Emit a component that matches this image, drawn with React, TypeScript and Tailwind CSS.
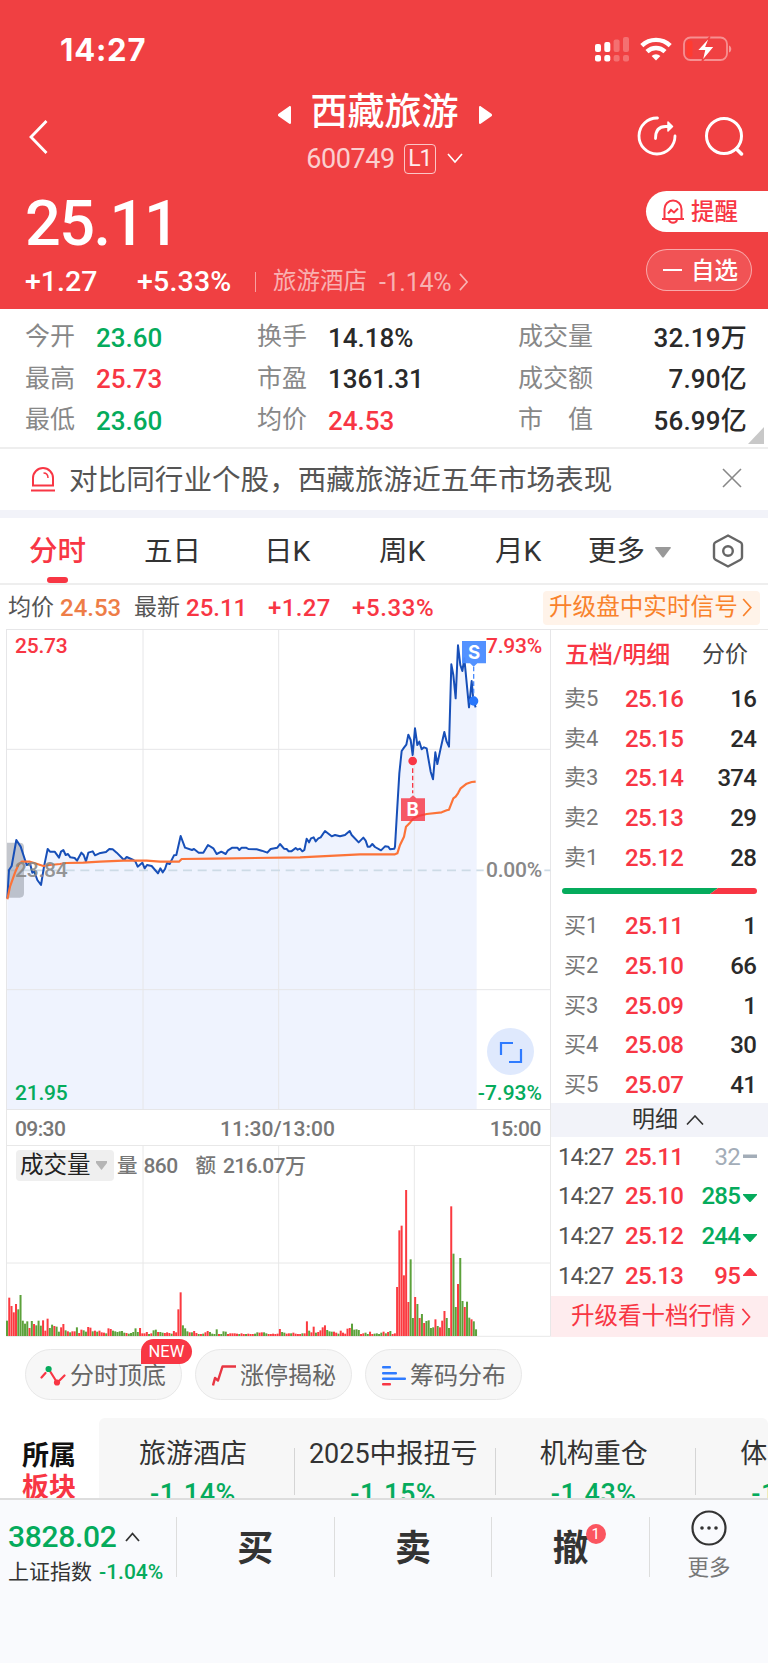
import clsx from 'clsx';

type Tone = 'up' | 'down' | 'dark';

const toneClass: Record<Tone, string> = {
  up: 'text-[#f83644]',
  down: 'text-[#05ab5c]',
  dark: 'text-[#2a2a2a]',
};

const stats: { label: string; value: string; tone: Tone }[][] = [
  [
    { label: '今开', value: '23.60', tone: 'down' },
    { label: '换手', value: '14.18%', tone: 'dark' },
    { label: '成交量', value: '32.19万', tone: 'dark' },
  ],
  [
    { label: '最高', value: '25.73', tone: 'up' },
    { label: '市盈', value: '1361.31', tone: 'dark' },
    { label: '成交额', value: '7.90亿', tone: 'dark' },
  ],
  [
    { label: '最低', value: '23.60', tone: 'down' },
    { label: '均价', value: '24.53', tone: 'up' },
    { label: '市　值', value: '56.99亿', tone: 'dark' },
  ],
];

const asks = [
  ['卖5', '25.16', '16'],
  ['卖4', '25.15', '24'],
  ['卖3', '25.14', '374'],
  ['卖2', '25.13', '29'],
  ['卖1', '25.12', '28'],
];

const bids = [
  ['买1', '25.11', '1'],
  ['买2', '25.10', '66'],
  ['买3', '25.09', '1'],
  ['买4', '25.08', '30'],
  ['买5', '25.07', '41'],
];

const ticks = [
  { price: '25.11', vol: '32', dir: 'flat' },
  { price: '25.10', vol: '285', dir: 'down' },
  { price: '25.12', vol: '244', dir: 'down' },
  { price: '25.13', vol: '95', dir: 'up' },
];

// Chart coordinates are in thirds of a pixel
const pricePoints =
  '22,835 27,750 35,738 49,660 62,680 80,735 90,730 97,758 103,755 112,780 123,795 132,740 143,687 150,695 164,695 177,713 183,695 190,690 197,705 204,702 211,712 224,714 231,722 244,698 251,705 258,724 265,698 278,694 285,706 298,700 318,696 328,687 338,688 350,698 372,720 380,711 400,720 406,724 413,740 427,728 434,745 441,735 455,738 474,760 481,745 488,757 495,747 501,729 509,732 522,706 529,705 542,648 555,683 576,690 582,687 596,698 610,698 624,675 640,685 650,702 664,695 677,702 684,691 697,683 712,683 718,690 725,683 738,683 745,687 770,688 785,692 802,698 812,687 832,683 840,672 852,686 860,687 866,694 874,694 887,684 893,689 900,686 907,694 913,690 920,656 927,667 933,655 941,652 947,664 955,655 962,652 975,633 995,649 1005,645 1020,649 1035,645 1049,633 1055,645 1076,667 1090,653 1097,662 1103,680 1110,680 1117,672 1125,681 1143,691 1155,679 1165,680 1170,688 1183,686 1185,680 1192,560 1198,460 1205,393 1212,383 1219,374 1225,344 1232,360 1238,405 1245,325 1252,375 1258,365 1265,388 1272,382 1280,385 1285,415 1292,455 1299,478 1306,397 1312,432 1322,385 1333,336 1340,365 1347,380 1354,133 1360,165 1367,235 1374,76 1381,135 1387,153 1393,115 1407,262 1415,183 1420,240 1427,262';

const avgPoints =
  '22,838 30,800 45,758 55,735 65,725 90,725 105,730 130,738 150,735 180,732 200,729 250,728 300,725 370,722 440,722 480,725 537,725 545,717 640,716 900,712 1080,703 1185,703 1192,700 1200,675 1212,650 1218,620 1230,608 1240,596 1255,588 1280,582 1325,577 1340,571 1347,569 1360,535 1367,530 1374,520 1382,505 1400,491 1415,486 1427,485';

// One entry per traded minute: direction + bar height
const volumes = (
  'g46 r115 r90 r71 r96 g80 g123 g46 g37 g44 r24 g45 r36 g32 g46 g31 r47 r16 r52 g24 g34 r30 g28 g13 r26 r36 g17 r14 g11 r14 r14 g26 r9 r19 g17 g13 r27 r25 g14 r16 ' +
  'g13 r16 r11 r10 g8 r23 r21 g16 g14 g12 g14 g15 g10 r9 g7 g9 g12 g23 g12 r24 r8 r8 r12 g6 r8 g17 g19 r12 g12 g10 r9 r11 r9 g7 r15 r11 r80 r131 g32 g23 ' +
  'g14 r11 g11 r15 r9 g6 r6 g7 r11 r15 g12 g7 g6 g20 r6 g6 g14 g13 r6 r8 r8 r8 r7 g6 r8 r6 g6 r7 r6 r6 g7 g11 r10 r11 g11 g8 r6 r6 r7 r6 ' +
  'r7 r21 g12 g10 r7 r8 g8 r10 r7 r6 r6 g8 r8 r44 g16 r11 r28 g10 r12 r17 r26 r32 g18 g14 g13 r13 r10 g7 r16 r10 r7 r22 r24 g37 g19 g20 g18 r6 r8 g10 ' +
  'g6 r13 r6 g7 g8 g6 g10 r13 g8 r12 g15 r6 r8 r147 r317 r331 r182 r438 r102 g230 g54 r117 g96 r54 g66 r39 g45 g47 g24 g26 r50 g30 r26 r46 r75 g54 g24 r389 g247 g87 ' +
  'r156 g234 g105 r87 g103 g55 r50 g44 g20'
).split(' ');

function Chevron({ className }: { className?: string }) {
  return (
    <svg className={className} viewBox="0 0 12 20" fill="none" stroke="currentColor" strokeWidth="1.8">
      <path d="M2 1l8 9-8 9" />
    </svg>
  );
}

function StatusBar() {
  return (
    <div className="flex h-[98px] items-center justify-between pr-[36px] pl-[60px]">
      <span className="font-[Inter] text-[31px] leading-none font-bold tracking-[0.8px]">14:27</span>
      <div className="flex items-center gap-[11px]">
        <svg width="34" height="25" viewBox="0 0 34 25" fill="#fff">
          <rect x="0" y="7" width="6" height="8" rx="2" />
          <rect x="9.3" y="5" width="6" height="10" rx="2" />
          <rect x="18.6" y="2.5" width="6" height="12.5" rx="2" opacity=".25" />
          <rect x="28" y="0" width="6" height="15" rx="2" opacity=".25" />
          <rect x="0" y="18" width="6" height="6.5" rx="2" />
          <rect x="9.3" y="18" width="6" height="6.5" rx="2" />
          <rect x="18.6" y="18" width="6" height="6.5" rx="2" opacity=".25" />
          <rect x="28" y="18" width="6" height="6.5" rx="2" opacity=".25" />
        </svg>
        <svg width="32" height="24" viewBox="0 0 32 24" fill="none" stroke="#fff" strokeWidth="4.400">
          <path d="M1.800 8.600a20.400 20.400 0 0 1 28.400 0" />
          <path d="M7 14.600a13 13 0 0 1 18 0" />
          <path d="M16 23.500l-4.400-4.600a6.400 6.400 0 0 1 8.800 0z" fill="#fff" stroke="none" />
        </svg>
        <svg width="49" height="26" viewBox="0 0 49 26" fill="none">
          <rect x="1" y="1.500" width="43" height="22.500" rx="6.500" stroke="#fff" strokeOpacity=".42" strokeWidth="1.800" />
          <rect x="3.500" y="4.500" width="6" height="16.500" rx="2.500" fill="#ff3b30" />
          <path d="M46 9.500c3 1 3 6 0 7z" fill="#fff" fillOpacity=".45" />
          <path d="M27 .5L14 14.500h7.500L19 25.500l12.500-15h-8.500z" fill="#fff" stroke="#f04042" strokeWidth="1.200" />
        </svg>
      </div>
    </div>
  );
}

function Header() {
  return (
    <header className="h-[309px] bg-[#f04042] text-white">
      <StatusBar />
      <div className="flex h-[82px] items-center pr-[24px] pl-[29px]">
        <svg width="20" height="34" viewBox="0 0 20 34" fill="none" stroke="#fff" strokeWidth="2.800" className="mt-[-4px]">
          <path d="M17.500 1L2 17l15.500 16" />
        </svg>
        <div className="mt-[-10px] flex flex-1 flex-col items-center pl-[83px]">
          <div className="flex items-center gap-[20px]">
            <svg width="13" height="18" viewBox="0 0 13 18" fill="#fff">
              <path d="M13 1.500v15c0 1.500-1 2-2 1L.6 10.200a1.600 1.600 0 0 1 0-2.400L11 .5c1-.9 2-.5 2 1z" />
            </svg>
            <h1 className="h-[40px] text-[37px] leading-[36px] font-medium">西藏旅游</h1>
            <svg width="13" height="18" viewBox="0 0 13 18" fill="#fff">
              <path d="M0 1.500v15c0 1.500 1 2 2 1l10.400-7.300a1.600 1.600 0 0 0 0-2.400L2 .5C1-.4 0 0 0 1.500z" />
            </svg>
          </div>
          <div className="mt-[9px] flex items-center">
            <span className="text-[27px] leading-[30px] tracking-[-0.4px] opacity-75">600749</span>
            <span className="ml-[9px] flex h-[30px] w-[32px] items-center justify-center rounded-[4px] border border-white/70 text-[23px] leading-none tracking-[-1px] text-white/90">
              L1
            </span>
            <svg width="16" height="11" viewBox="0 0 16 11" fill="none" stroke="#fff" strokeWidth="1.600" className="ml-[11px]">
              <path d="M1 1l7 8 7-8" />
            </svg>
          </div>
        </div>
        <svg width="40" height="40" viewBox="0 0 40 40" fill="none" stroke="#fff" strokeWidth="2.800" strokeLinecap="round" className="-mt-[6px]">
          <path d="M20.500 2A18 18 0 1 0 38 20" />
          <path d="M18.500 22.500c0-8 3-12 10-12h3" />
          <path d="M31 6l4.500 4.500L31 15z" fill="#fff" strokeWidth="1.500" strokeLinejoin="round" />
        </svg>
        <svg width="40" height="40" viewBox="0 0 40 40" fill="none" stroke="#fff" strokeWidth="3" strokeLinecap="round" className="-mt-[6px] ml-[27px]">
          <circle cx="20" cy="20" r="17.500" />
          <path d="M32.500 33l5 5" strokeWidth="3.500" />
        </svg>
      </div>
      <div className="flex h-[129px] justify-between pl-[25px]">
        <div className="pt-[12px]">
          <div className="text-[63px] leading-[63px] font-medium tracking-[-1.500px]">25.11</div>
          <div className="mt-[12px] flex h-[30px] items-center text-[28.500px] leading-none font-medium">
            <span className="w-[112px]">+1.27</span>
            <span className="w-[118px] tracking-[0.2px]">+5.33%</span>
            <span className="h-[20px] w-px bg-white/50"></span>
            <span className="ml-[17px] text-[23.500px] font-normal text-white/60">旅游酒店</span>
            <span className="ml-[12px] text-[25px] font-normal tracking-[-0.3px] text-white/60">-1.14%</span>
            <Chevron className="ml-[7px] h-[18px] w-[11px] text-white/60" />
          </div>
        </div>
        <div className="flex flex-col items-end pt-[11px] text-[23.500px] leading-none font-medium">
          <button className="flex h-[41px] w-[122px] items-center rounded-l-full bg-white pl-[14px] text-[#f83644]">
            <svg width="26" height="25" viewBox="0 0 26 25" fill="none" stroke="currentColor" strokeWidth="2">
              <path d="M2 20h22M4.500 19.500V10a8.500 8.500 0 0 1 17 0v9.500M9 21c1 3.500 7 3.500 8 0" />
              <path d="M8 14.500l3-3.500 3 2.500 4-4" />
            </svg>
            <span className="ml-[5px] pt-[3px]">提醒</span>
          </button>
          <button className="mt-[17px] mr-[16px] flex h-[42px] w-[106px] items-center rounded-full border border-white/50 bg-white/10 pl-[16px]">
            <span className="h-[2px] w-[19px] bg-white"></span>
            <span className="ml-[9px] pt-[3px]">自选</span>
          </button>
        </div>
      </div>
    </header>
  );
}

function Stats() {
  return (
    <section className="relative flex h-[140px] flex-col border-b-2 border-[#eee] pt-[8px]">
      {stats.map((row, i) => (
        <div key={i} className="flex h-[41.500px] items-center pr-[21px] pl-[25px] text-[26px] leading-none">
          {row.map((cell, j) => (
            <div key={cell.label} className={clsx('flex items-center', j === 0 && 'w-[232px]', j === 1 && 'w-[261px]', j === 2 && 'flex-1')}>
              <span className={clsx('pb-[2px] text-[25px] text-[#888]', j < 2 && 'w-[71px]')}>{cell.label}</span>
              <span className={clsx('font-medium', j === 2 && 'ml-auto tracking-[0.2px]', toneClass[cell.tone])}>{cell.value}</span>
            </div>
          ))}
        </div>
      ))}
      <svg className="absolute right-[4px] bottom-[3px]" width="16" height="17" viewBox="0 0 16 17" fill="#c8c8c8">
        <path d="M16 0v17H0z" />
      </svg>
    </section>
  );
}

function Notice() {
  return (
    <section className="flex h-[69px] items-center border-b-[8px] border-[#f2f3f9] pr-[26px] pl-[31px] text-[28.600px] leading-none text-[#555]">
      <svg width="24" height="25" viewBox="0 0 24 25" fill="none" stroke="#f83644" strokeWidth="2">
        <path d="M2 18.500V11a10 10 0 0 1 20 0v7.500zM0 23.500h24" />
        <path d="M12.500 6c3 0 4.500 2 4.500 5" strokeWidth="1.500" />
      </svg>
      <span className="ml-[14px] flex-1 pt-[2px] whitespace-nowrap">对比同行业个股，西藏旅游近五年市场表现</span>
      <svg width="20" height="20" viewBox="0 0 20 20" fill="none" stroke="#888" strokeWidth="1.600" className="-mt-[3px]">
        <path d="M1 1l18 18M19 1L1 19" />
      </svg>
    </section>
  );
}

function Tabs() {
  return (
    <nav className="flex h-[67px] items-center border-b-2 border-[#eee] pt-[4px] pr-[24px] pl-[29px] text-[28.500px] leading-none text-[#333]">
      <span className="relative w-[115px] font-medium text-[#f83644]">
        分时
        <i className="absolute top-[39px] left-[18px] h-[6px] w-[21px] rounded-[3px] bg-[#f83644]"></i>
      </span>
      <span className="w-[120px]">五日</span>
      <span className="w-[115px]">日K</span>
      <span className="w-[116px]">周K</span>
      <span className="w-[93px]">月K</span>
      <span>更多</span>
      <svg width="16" height="11" viewBox="0 0 16 11" fill="#999" className="ml-[10px]">
        <path d="M1 0h14q1.500 0 .6 1.300L9 10q-1 1-2 0L.4 1.300Q-.5 0 1 0z" />
      </svg>
      <svg width="32" height="34" viewBox="0 0 32 34" fill="none" stroke="#666" strokeWidth="2.400" className="-mt-[4px] ml-auto">
        <path d="M16 1.500l12.500 6.800q1.500.8 1.500 2.500v12.400q0 1.700-1.500 2.500L16 32.500 3.500 25.700Q2 24.900 2 23.200V10.800q0-1.700 1.500-2.500z" />
        <circle cx="16" cy="17" r="4.800" />
      </svg>
    </nav>
  );
}

function QuoteLine() {
  return (
    <div className="flex h-[44px] items-center pt-px pr-[8px] pl-[8px] text-[24px] leading-none font-medium text-[#f83644]">
      <span className="w-[52px] text-[23px] font-normal text-[#555]">均价</span>
      <span className="w-[74px] text-[#ee7d47]">24.53</span>
      <span className="w-[52px] text-[23px] font-normal text-[#555]">最新</span>
      <span className="w-[82px]">25.11</span>
      <span className="w-[84px] tracking-[0.4px]">+1.27</span>
      <span className="tracking-[0.6px]">+5.33%</span>
      <button className="ml-auto flex h-[34px] w-[217px] items-center rounded-[4px] bg-[#fff3e9] pl-[6px] text-[23.600px] font-normal text-[#f9822c]">
        升级盘中实时信号
        <Chevron className="ml-[3px] h-[19px] w-[12px]" />
      </button>
    </div>
  );
}

function PriceChart() {
  return (
    <div className="relative h-[481px] w-[545px] text-[21px] leading-none font-medium">
      <svg className="block" width="545" height="481" viewBox="18 27 1635 1443" fill="none">
        <polygon points={`21,1467 ${pricePoints} 1430,262 1430,1467`} fill="#eff3fe" />
        <g stroke="#e6e6e8" strokeWidth="3">
          <rect x="19.500" y="28.500" width="1632" height="1440" />
          <path d="M19 388h1632M19 1109h1632" />
          <path d="M429 28v1440M836 28v1440M1243 28v1440" />
        </g>
        <path d="M21 751h1430M1633 751h18" stroke="#cddbe6" strokeWidth="5" strokeDasharray="27 17" />
        <path d="M21 668h38q13 0 13 13v138q0 14-13 14H21z" fill="#848a96" fillOpacity=".48" />
        <polyline points={pricePoints} stroke="#174fb8" strokeWidth="6" strokeLinejoin="round" />
        <polyline points={avgPoints} stroke="#fc7338" strokeWidth="6.500" strokeLinejoin="round" />
        {/* Buy marker */}
        <path d="M1238 445v75" stroke="#f83644" strokeWidth="4" strokeDasharray="14 8" />
        <circle cx="1238" cy="423" r="13" fill="#f83644" />
        <path d="M1203 535h26l10-9 10 9h26v68h-72z" fill="#f83644" fillOpacity=".82" />
        {/* Sell marker */}
        <path d="M1421 140v90" stroke="#4b8bfb" strokeWidth="4" strokeDasharray="14 8" />
        <circle cx="1421" cy="243" r="14" fill="#2877fc" />
        <path d="M1386 63h72v67h-26l-11 10-11-10h-24z" fill="#4a8cff" fillOpacity=".95" />
        <g fill="#fff" fontFamily="Inter" fontWeight="700" fontSize="56" textAnchor="middle">
          <text x="1238" y="589">B</text>
          <text x="1422" y="116">S</text>
        </g>
      </svg>
      <span className="absolute top-[7px] left-[9px] tracking-[-0.2px] text-[#f83644]">25.73</span>
      <span className="absolute top-[7px] right-[9px] tracking-[-0.2px] text-[#f83644]">7.93%</span>
      <span className="absolute top-[231px] left-[9px] tracking-[-0.2px] text-[#888]/90">23.84</span>
      <span className="absolute top-[231px] right-[9px] tracking-[-0.2px] text-[#888]">0.00%</span>
      <span className="absolute bottom-[6px] left-[9px] tracking-[-0.2px] text-[#05ab5c]">21.95</span>
      <span className="absolute right-[9px] bottom-[6px] text-[#05ab5c]">-7.93%</span>
      <button className="absolute right-[17px] bottom-[35px] flex size-[47px] items-center justify-center rounded-full bg-[#dfe9fd]">
        <svg width="24" height="24" viewBox="0 0 24 24" fill="none" stroke="#2f7bff" strokeWidth="2.200">
          <path d="M2 15V3h12M22 9v13H10" />
        </svg>
      </button>
    </div>
  );
}

function VolumeChart() {
  return (
    <div className="relative h-[191px] w-[545px]">
      <svg className="block" width="545" height="191" viewBox="0 0 1635 573">
        <path d="M1.500 0v571h1632V0M411 0v571M818 0v571M1225 0v571M0 351h1635" fill="none" stroke="#e8e8e8" strokeWidth="3" />
        {volumes.map((v, i) => {
          const h = Number(v.slice(1));
          return <rect key={i} x={i * 6.765} y={570 - h} width="6" height={h} fill={v[0] === 'r' ? '#fb3a40' : '#5ca13b'} />;
        })}
      </svg>
      <div className="absolute top-[4px] left-[10px] flex items-center text-[21px] leading-none font-medium text-[#777]">
        <span className="flex h-[31px] w-[98px] items-center rounded-[4px] bg-[#efefef] pl-[4px] text-[23.500px] font-normal text-[#222]">
          成交量
          <svg width="11" height="9" viewBox="0 0 11 9" fill="#b5b5b5" className="ml-[5px]">
            <path d="M0 0h11v2L5.500 9 0 2z" />
          </svg>
        </span>
        <span className="ml-[3px] pt-px text-[20.500px]">量</span>
        <span className="ml-[6px] pt-px tracking-[-0.6px]">860</span>
        <span className="ml-[18px] pt-px text-[20.500px]">额</span>
        <span className="ml-[7px] pt-px tracking-[-0.600px]">216.07万</span>
      </div>
    </div>
  );
}

function OrderRow({ row }: { row: string[] }) {
  return (
    <div className="flex h-[39.700px] items-center pr-[12px] pl-[13px] text-[24px] leading-none">
      <span className="w-[61px] text-[22px] text-[#777]">{row[0]}</span>
      <span className="font-medium tracking-[-0.6px] text-[#f83644]">{row[1]}</span>
      <span className="ml-auto font-medium tracking-[-0.8px] text-[#2a2a2a]">{row[2]}</span>
    </div>
  );
}

function OrderBook() {
  return (
    <aside className="h-[708px] flex-1">
      <div className="h-px bg-[#e8e8e8]"></div>
      <div className="flex h-[49px] items-center justify-between pr-[20px] pl-[14px] text-[23px] leading-none">
        <span className="text-[24px] font-medium text-[#f83644]">五档/明细</span>
        <span className="text-[#444]">分价</span>
      </div>
      {asks.map((row) => (
        <OrderRow key={row[0]} row={row} />
      ))}
      <svg width="195" height="6" viewBox="0 0 195 6" className="mt-[11px] mb-[12px] ml-[11px] block">
        <path d="M3 0h153l-8 6H3a3 3 0 0 1 0-6z" fill="#05ab5c" />
        <path d="M156 0h36a3 3 0 0 1 0 6h-44z" fill="#f83644" />
      </svg>
      {bids.map((row) => (
        <OrderRow key={row[0]} row={row} />
      ))}
      <div className="-mt-[2px] flex h-[34px] items-center justify-center bg-[#f2f3f9] pl-[17px] text-[23px] leading-none text-[#333]">
        明细
        <svg width="18" height="10" viewBox="0 0 18 10" fill="none" stroke="#333" strokeWidth="1.600" className="ml-[8px]">
          <path d="M1 9.500L9 1l8 8.500" />
        </svg>
      </div>
      {ticks.map((t) => (
        <div key={t.price} className="flex h-[39.700px] items-center pr-[11px] pl-[7px] text-[24px] leading-none">
          <span className="w-[67px] tracking-[-0.9px] text-[#555]">14:27</span>
          <span className="font-medium tracking-[-0.6px] text-[#f83644]">{t.price}</span>
          <span
            className={clsx(
              'ml-auto tracking-[-0.8px]',
              t.dir === 'flat' && 'text-[#a3adb8]',
              t.dir === 'down' && 'font-medium text-[#05ab5c]',
              t.dir === 'up' && 'font-medium text-[#f83644]'
            )}
          >
            {t.vol}
          </span>
          <svg width="14" height="16" viewBox="0 0 14 16" className="ml-[3px]">
            {t.dir === 'flat' && <rect y="5.500" width="14" height="3.500" fill="#a3adb8" />}
            {t.dir === 'down' && <path d="M0 6h14v1l-6.500 7h-1L0 7z" fill="#05ab5c" />}
            {t.dir === 'up' && <path d="M0 8h14V7L7.500 0h-1L0 7z" fill="#f83644" />}
          </svg>
        </div>
      ))}
      <div className="flex h-[41px] items-center bg-[#feecee] pt-px pl-[20px] text-[23.500px] leading-none text-[#f83644]">
        升级看十档行情
        <Chevron className="ml-[4px] h-[18px] w-[12px]" />
      </div>
    </aside>
  );
}

function Tools() {
  return (
    <section className="flex h-[81px] gap-[13px] pt-[12px] pl-[25px] text-[24px] leading-none text-[#666]">
      <div className="relative flex h-[51px] w-[157px] items-center rounded-full border border-[#e8e8e8] bg-[#f7f7f7] pl-[14px]">
        <svg width="26" height="22" viewBox="0 0 26 22" fill="none" stroke="#f83644" strokeWidth="2.200" strokeLinecap="round">
          <path d="M1.500 13.500l4-4.500M10.500 8l5 8M19.500 16.500l5-5" />
          <circle cx="8.600" cy="5" r="3.100" fill="#05ab5c" stroke="none" />
          <circle cx="17" cy="18.500" r="3.100" fill="#f83644" stroke="none" />
        </svg>
        <span className="ml-[4px] pt-[3px]">分时顶底</span>
        <span className="absolute -top-[11px] right-[-11px] flex h-[25px] w-[51px] items-center justify-center rounded-[13px] rounded-bl-none bg-[#f83644] pt-[2px] text-[16.500px] text-white">
          NEW
        </span>
      </div>
      <div className="flex h-[51px] w-[157px] items-center rounded-full border border-[#e8e8e8] bg-[#f7f7f7] pl-[16px]">
        <svg width="25" height="22" viewBox="0 0 25 22" fill="none" stroke="#e83642" strokeWidth="2.400" strokeLinejoin="round">
          <path d="M1 21.500l2-7.500 3 2.500L10.500 2.500H24" />
        </svg>
        <span className="ml-[3px] pt-[3px]">涨停揭秘</span>
      </div>
      <div className="flex h-[51px] w-[157px] items-center rounded-full border border-[#e8e8e8] bg-[#f7f7f7] pl-[16px]">
        <svg width="24" height="22" viewBox="0 0 24 22" fill="#2f7bff">
          <rect x="0" y="2" width="9" height="2.500" rx="1" />
          <rect x="0" y="8" width="15" height="2.500" rx="1" />
          <rect x="0" y="13.500" width="24" height="2.500" rx="1" />
          <rect x="0" y="19" width="9" height="2.500" rx="1" fill="#f83644" />
        </svg>
        <span className="ml-[4px] pt-[3px]">筹码分布</span>
      </div>
    </section>
  );
}

const sectors = [
  ['旅游酒店', '-1.14%'],
  ['2025中报扭亏', '-1.15%'],
  ['机构重仓', '-1.43%'],
  ['体育产业', '-1.20%'],
];

function Sectors() {
  return (
    <section className="flex h-[80px] overflow-hidden">
      <div className="w-[99px] shrink-0 pt-[22px] pl-[22px] text-[27px] leading-[32px] font-bold text-[#111]">
        所属
        <div className="text-[#f83644]">板块</div>
      </div>
      <div className="flex h-[120px] w-[669px] shrink-0 overflow-hidden rounded-t-[6px] bg-[#f7f7f7]">
        {sectors.map(([name, change], i) => (
          <div key={name} className={clsx('flex shrink-0', i === 0 ? 'w-[196px]' : 'w-[200.500px]')}>
            <div className={clsx('flex flex-1 flex-col items-center pt-[22px] whitespace-nowrap', i === 0 ? 'pr-[7px]' : 'pr-[3px]')}>
              <span className="text-[27px] leading-[28px] text-[#333]">{name}</span>
              <span className="mt-[13px] text-[27px] leading-[26px] font-medium tracking-[0.6px] text-[#05ab5c]">{change}</span>
            </div>
            <span className="mt-[30px] h-[47px] w-px bg-[#d5d5d5]"></span>
          </div>
        ))}
      </div>
    </section>
  );
}

function BottomBar() {
  return (
    <footer className="flex h-[165px] border-t-2 border-[#ddd] bg-[#f9fafd] leading-none text-[#333]">
      <div className="w-[176px] pt-[20px] pl-[8px]">
        <div className="flex h-[34px] items-center">
          <span className="text-[30px] font-medium tracking-[-0.3px] text-[#05ab5c]">3828.02</span>
          <svg width="15" height="10" viewBox="0 0 15 10" fill="none" stroke="#333" strokeWidth="1.800" className="ml-[8px]">
            <path d="M1 9l6.500-7.500L14 9" />
          </svg>
        </div>
        <div className="mt-[7px] flex h-[22px] items-center">
          <span className="text-[21px]">上证指数</span>
          <span className="ml-[7px] text-[21px] font-medium text-[#05ab5c]">-1.04%</span>
        </div>
      </div>
      {['买', '卖', '撤'].map((label) => (
        <div key={label} className="mt-[17px] flex h-[60px] w-[157.700px] items-center justify-center border-l border-[#ddd] pt-[4px] text-[36px] font-bold">
          <span className="relative">
            {label}
            {label === '撤' && (
              <i className="absolute -top-[7px] left-[33px] flex size-[20px] items-center justify-center rounded-full bg-[#fb5560] text-[15px] font-normal text-white not-italic">
                1
              </i>
            )}
          </span>
        </div>
      ))}
      <div className="mt-[17px] flex h-[60px] flex-1 flex-col items-center border-l border-[#ddd]">
        <svg width="36" height="36" viewBox="0 0 36 36" fill="none" stroke="#333" strokeWidth="2.200" className="-mt-[7px] shrink-0">
          <circle cx="18" cy="18" r="16.500" />
          <g fill="#333" stroke="none">
            <circle cx="11" cy="18" r="1.800" />
            <circle cx="18" cy="18" r="1.800" />
            <circle cx="25" cy="18" r="1.800" />
          </g>
        </svg>
        <span className="mt-[11px] text-[21.500px] text-[#777]">更多</span>
      </div>
    </footer>
  );
}

export default function App() {
  return (
    <div className="h-[1663px] w-[768px] overflow-hidden bg-white font-[Roboto,'Noto_Sans_CJK_SC',sans-serif]">
      <Header />
      <Stats />
      <Notice />
      <Tabs />
      <QuoteLine />
      <main className="flex h-[708px]">
        <div className="w-[551px] pl-[6px]">
          <PriceChart />
          <div className="flex h-[36px] items-center justify-between border-x border-b border-[#e8e8e8] pt-[4px] pr-[9px] pl-[8px] text-[21px] leading-none font-medium text-[#777]">
            <span className="tracking-[-0.6px]">09:30</span>
            <span>11:30/13:00</span>
            <span className="tracking-[-0.4px]">15:00</span>
          </div>
          <VolumeChart />
        </div>
        <OrderBook />
      </main>
      <Tools />
      <Sectors />
      <BottomBar />
    </div>
  );
}
